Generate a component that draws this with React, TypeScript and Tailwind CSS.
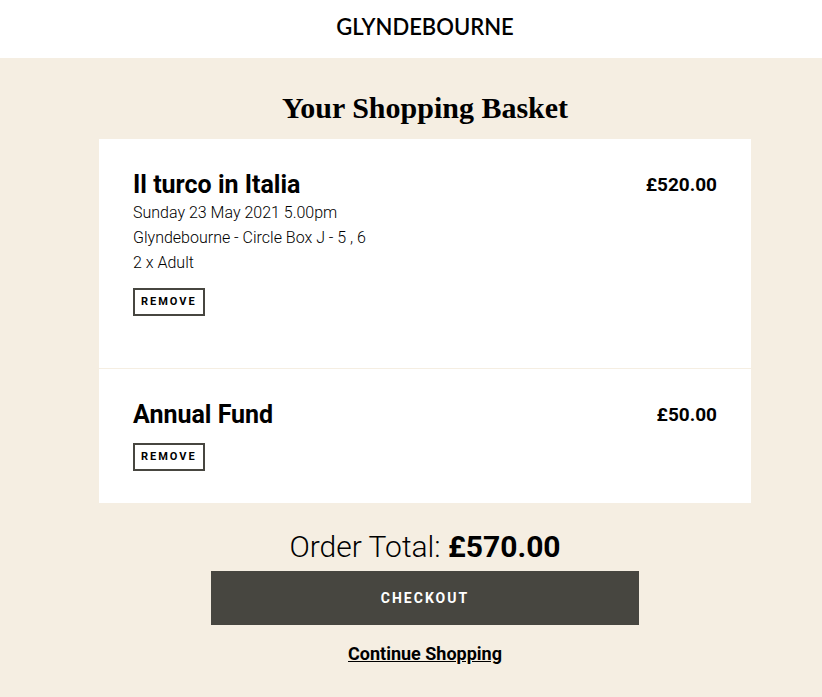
type Item = {
    id: string
    title: string
    details: string[]
    price: string
}

const items: Item[] = [
    {
        id: 'turco',
        title: 'Il turco in Italia',
        details: [
            'Sunday 23 May 2021 5.00pm',
            'Glyndebourne - Circle Box J - 5 , 6',
            '2 x Adult',
        ],
        price: '£520.00',
    },
    { id: 'fund', title: 'Annual Fund', details: [], price: '£50.00' },
]

const BasketItem = ({ title, details, price }: Item) => {
    const hasDetails = details.length > 0

    return (
        <li className={hasDetails ? 'flex justify-between px-[34px] pt-[30px] pb-[52px]' : 'flex justify-between px-[34px] pt-[30px] pb-8'}>
            <div>
                <h2 className="text-[25px] leading-[31px] font-bold">{title}</h2>
                {details.map((line) => (
                    <p key={line} className="text-base leading-[25px] font-light">{line}</p>
                ))}
                <button
                    type="button"
                    aria-label={`Remove ${title}`}
                    className="mt-[13px] block h-7 border-2 border-[#474640] px-[6px] text-[11px] leading-[24px] font-bold tracking-[2px]"
                >
                    REMOVE
                </button>
            </div>
            <p className="text-[19px] leading-[32px] font-bold">{price}</p>
        </li>
    )
}

export default function App() {
    return (
        <div className="min-h-screen bg-[#f5eee2] font-['Roboto',sans-serif] text-black">
            <header className="flex h-[58px] items-center justify-center bg-white pb-1 pl-7">
                <a href="#" className="font-['Lato',sans-serif] text-[22px] leading-7 font-semibold">
                    GLYNDEBOURNE
                </a>
            </header>

            <main className="pt-8 pr-[71px] pb-8 pl-[99px]">
                <h1 className="text-center font-['Liberation_Serif',serif] text-[30px] leading-[36px] font-bold">
                    Your Shopping Basket
                </h1>

                <ul className="mt-[13px] divide-y divide-[#f5eee2] bg-white">
                    {items.map((item) => (
                        <BasketItem key={item.id} {...item} />
                    ))}
                </ul>

                <div className="mx-28 mt-6 flex flex-col text-center">
                    <p className="text-[30px] leading-[40px] font-light">
                        Order Total: <strong className="font-bold">£570.00</strong>
                    </p>
                    <button
                        type="button"
                        className="mt-1 h-[54px] bg-[#474640] text-sm font-bold tracking-[2px] text-white"
                    >
                        CHECKOUT
                    </button>
                    <a href="#" className="mt-4 self-center text-[18px] leading-[26px] font-bold underline">
                        Continue Shopping
                    </a>
                </div>
            </main>
        </div>
    )
}
